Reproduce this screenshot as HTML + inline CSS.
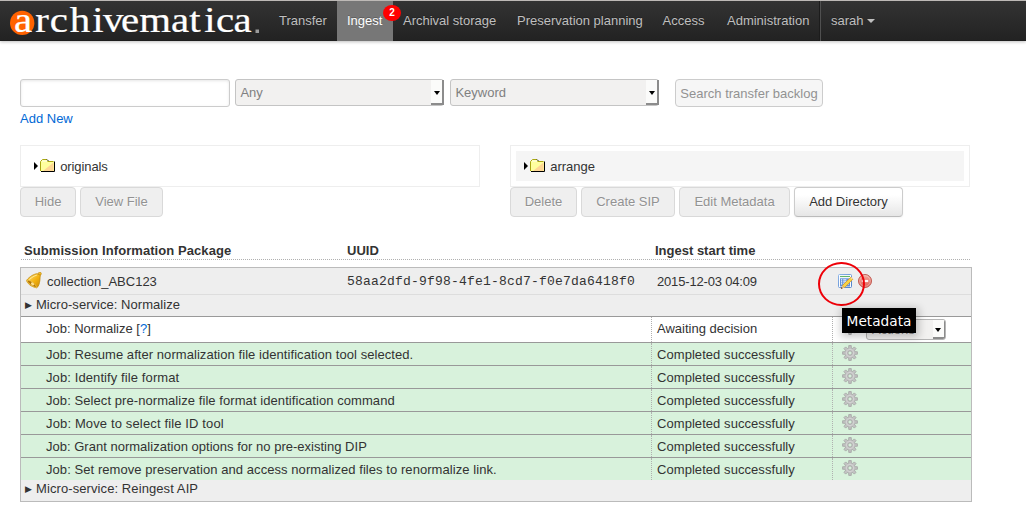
<!DOCTYPE html>
<html lang="en">
<head>
<meta charset="utf-8">
<title>Archivematica Dashboard - Ingest</title>
<style>
*{box-sizing:border-box;}
html,body{margin:0;padding:0;}
body{width:1026px;height:512px;overflow:hidden;background:#fff;position:relative;
  font-family:"Liberation Sans",Arial,sans-serif;font-size:13px;line-height:18px;color:#404040;}
a{color:#0069d6;text-decoration:none;}

/* ---------- top bar ---------- */
#topbar{position:absolute;left:0;top:0;width:1026px;height:41px;border-top:1px solid #bdb9b6;
  background:linear-gradient(#333,#222);box-shadow:0 1px 3px rgba(0,0,0,.25),inset 0 -1px 0 rgba(0,0,0,.1);}
#logo{position:absolute;left:10px;top:10px;width:24px;height:24px;border-radius:50%;background:#ff6200;}
#logo span{position:absolute;left:0;top:0;width:24px;text-align:center;color:#fff;font-size:30px;line-height:24px;}
#brand{position:absolute;left:36px;top:0;height:40px;line-height:40px;color:#fff;
  font-family:"Liberation Serif","Times New Roman",serif;font-size:36px;white-space:nowrap;}
#reg{position:absolute;left:254px;top:26px;width:5px;height:5px;background:#999;border-radius:1px;}
.nav a{position:absolute;top:0;height:40px;line-height:19px;padding:10px 10px 11px;color:#bfbfbf;
  text-shadow:0 -1px 0 rgba(0,0,0,.25);white-space:nowrap;}
.nav a.active{background:#777;color:#fff;}
#badge{position:absolute;left:383px;top:4px;width:18px;height:16px;border-radius:50%;background:#f00;
  color:#fff;font-size:10px;font-weight:bold;line-height:16px;text-align:center;}
#usersep{position:absolute;left:819px;top:0;height:40px;background:#505050;border-left:1px solid #1c1c1c;width:2px;}
.caret{display:inline-block;width:0;height:0;border-left:4px solid transparent;border-right:4px solid transparent;
  border-top:4px solid #bfbfbf;vertical-align:middle;margin-left:3px;margin-top:-1px;}

/* ---------- search row ---------- */
#q{position:absolute;left:20px;top:79px;width:210px;height:28px;border:1px solid #ccc;border-radius:3px;
  background:#fff;box-shadow:inset 0 1px 3px rgba(0,0,0,.1);}
.sel{position:absolute;top:79px;width:209px;height:27px;border:1px solid #c4c4c4;border-radius:3px;
  background:#f2f1f0;color:#808080;line-height:25px;padding-left:4.4px;font-size:13px;}
.sel i,.jsel i{position:absolute;right:-1px;top:0;bottom:0;width:13px;background:#fbfbfa;
  border-right:2px solid #8c8c8c;border-bottom:2px solid #8c8c8c;}
.sel i:after,.jsel i:after{content:"";position:absolute;left:3px;top:11px;border-left:3.5px solid transparent;
  border-right:3.5px solid transparent;border-top:4px solid #000;}
.jsel i:after{top:8px;left:1.500px;}
#sbtn{position:absolute;left:675px;top:79px;width:148px;height:28px;border:1px solid #ccc;border-radius:4px;
  background:#f6f6f6;color:#929292;line-height:28px;text-align:center;font-size:13px;}
#addnew{position:absolute;left:20px;top:110px;}

/* ---------- panes ---------- */
.pane{position:absolute;top:145px;height:42px;border:1px solid #eee;background:#fff;}
.pane .row{position:absolute;left:5px;right:5px;top:5px;height:30px;}
.pane .tri{position:absolute;left:8px;top:11px;border-top:4.5px solid transparent;border-bottom:4.5px solid transparent;border-left:4.5px solid #000;}
.pane svg{position:absolute;left:13px;top:7px;}
.pane .lbl{position:absolute;left:34.2px;top:7px;color:#333;}
.btn{position:absolute;top:187px;height:30px;border:1px solid #ccc;border-bottom-color:#bbb;border-radius:4px;
  background:linear-gradient(#fff,#fff 25%,#e6e6e6);color:#333;text-align:center;line-height:27px;
  text-shadow:0 1px 1px rgba(255,255,255,.75);box-shadow:inset 0 1px 0 rgba(255,255,255,.2),0 1px 2px rgba(0,0,0,.05);}
.btn.dis{background:#efefef;color:#929292;border-color:#d9d9d9;box-shadow:none;}

/* ---------- table ---------- */
.th{position:absolute;top:242px;font-weight:bold;color:#333;}
#thline{position:absolute;left:21px;top:259px;width:949px;border-top:1px dotted #b0b0b0;}
#sip{position:absolute;left:20px;top:267px;width:952px;height:235px;border:1px solid #bbb;background:#eee;}
#siprow{position:absolute;left:0;top:0;width:950px;height:27px;border-bottom:1px solid #ddd;background:#eee;}
.abs{position:absolute;white-space:nowrap;}
.mono{font-family:"Liberation Mono","Courier New",monospace;}
.ms{position:absolute;left:0;width:950px;height:22px;line-height:18px;color:#333;}
.job{position:absolute;left:0;width:950px;height:23px;background:#d8f2dc;border-top:1px solid #999;color:#333;}
.job .n{position:absolute;left:25px;top:3px;white-space:nowrap;}
.job .s{position:absolute;left:630px;top:0;bottom:0;width:182px;border-left:1px dotted #b0b0b0;border-right:1px dotted #b0b0b0;padding:3px 0 0 5px;white-space:nowrap;}
.job svg.gear{position:absolute;left:821px;top:2px;}
.jsel{position:absolute;left:845px;top:2px;width:80px;height:21px;border:1px solid #b5b5b5;border-radius:3px;background:#f2f1f0;color:#808080;line-height:19px;padding-left:5px;font-size:13px;overflow:hidden;}

/* ---------- annotation ---------- */
#ring{position:absolute;left:818px;top:262px;width:46.500px;height:44px;border:2px solid #ee0008;border-radius:50%;}
#tip{position:absolute;left:842px;top:308px;width:74px;height:25px;background:#000;color:#fff;
  font-family:"DejaVu Sans",sans-serif;font-size:13.700px;line-height:26.500px;text-align:center;
  box-shadow:1px 2px 8px 2px rgba(0,0,0,.22);}
</style>
</head>
<body>

<div id="topbar">
  <svg id="logosvg" width="270" height="40" viewBox="0 0 270 40" style="position:absolute;left:0;top:0">
    <circle cx="22.2" cy="21.9" r="12.2" fill="#ff6200"/>
    <text transform="scale(1.15 1)" x="12.09 30.61 43.22 60.70 80.17 89.48 105.22 121.04 148.70 164.52 177.57 187.74 202.96" y="31.2" font-family="'Liberation Serif','Times New Roman',serif" font-size="35.5" fill="#fff" stroke="#fff" stroke-width="0.25">archivematica</text>
    <rect x="255.5" y="28.5" width="3.5" height="3.5" fill="#9a9a9a"/>
  </svg>
  <div class="nav">
    <a style="left:269px">Transfer</a>
    <a class="active" style="left:337px;width:56px">Ingest</a>
    <a style="left:393px">Archival storage</a>
    <a style="left:507px">Preservation planning</a>
    <a style="left:652.5px">Access</a>
    <a style="left:717px">Administration</a>
    <a style="left:821px">sarah<span class="caret"></span></a>
  </div>
  <div id="badge">2</div>
  <div id="usersep"></div>
</div>

<div id="q"></div>
<div class="sel" style="left:235px">Any<i></i></div>
<div class="sel" style="left:450px">Keyword<i></i></div>
<div id="sbtn">Search transfer backlog</div>
<a id="addnew">Add New</a>

<div class="pane" style="left:20px;width:460px">
  <div class="row">
    <span class="tri"></span>
    <svg width="17" height="15" viewBox="0 0 17 15"><rect x="0" y="0" width="17" height="15" rx="2" fill="#fff" opacity=".0"/><path d="M2 3 L3.5 1.5 H8 L9.5 3.5 H15 V13 H2 Z" fill="#ffff9e"/><path d="M3 2.5 H8 V3.5 H3 Z" fill="#fffff0"/><path d="M4 13 L14.5 4.5 V13 Z" fill="#ffb08a" opacity=".5"/><path d="M1.5 13 V3.5 L3.5 1.5 H8" fill="none" stroke="#aaa812" stroke-width="1"/><path d="M8.5 3.5 H14.5" fill="none" stroke="#aaa812" stroke-width="1"/><path d="M8 1.5 L9.5 3" fill="none" stroke="#222" stroke-width="1"/><path d="M15.5 3.5 V13.5 H2" fill="none" stroke="#000" stroke-width="1"/></svg>
    <span class="lbl" style="letter-spacing:-.1px">originals</span>
  </div>
</div>
<div class="pane" style="left:510px;width:460px">
  <div class="row" style="background:#f5f5f5">
    <span class="tri"></span>
    <svg width="17" height="15" viewBox="0 0 17 15"><rect x="0" y="0" width="17" height="15" rx="2" fill="#fff" opacity=".0"/><path d="M2 3 L3.5 1.5 H8 L9.5 3.5 H15 V13 H2 Z" fill="#ffff9e"/><path d="M3 2.5 H8 V3.5 H3 Z" fill="#fffff0"/><path d="M4 13 L14.5 4.5 V13 Z" fill="#ffb08a" opacity=".5"/><path d="M1.5 13 V3.5 L3.5 1.5 H8" fill="none" stroke="#aaa812" stroke-width="1"/><path d="M8.5 3.5 H14.5" fill="none" stroke="#aaa812" stroke-width="1"/><path d="M8 1.5 L9.5 3" fill="none" stroke="#222" stroke-width="1"/><path d="M15.5 3.5 V13.5 H2" fill="none" stroke="#000" stroke-width="1"/></svg>
    <span class="lbl">arrange</span>
  </div>
</div>

<div class="btn dis" style="left:20px;width:56px">Hide</div>
<div class="btn dis" style="left:80px;width:83px">View File</div>
<div class="btn dis" style="left:510px;width:67px">Delete</div>
<div class="btn dis" style="left:581px;width:94px">Create SIP</div>
<div class="btn dis" style="left:679px;width:111px">Edit Metadata</div>
<div class="btn" style="left:794px;width:109px">Add Directory</div>

<div class="th" style="left:24px;letter-spacing:.07px">Submission Information Package</div>
<div class="th" style="left:347px">UUID</div>
<div class="th" style="left:655px">Ingest start time</div>
<div id="thline"></div>

<div id="sip">
  <div id="siprow">
    <svg width="17" height="17" viewBox="0 0 17 17" style="position:absolute;left:5px;top:4px"><defs><linearGradient id="bg" x1="0" y1="0" x2="1" y2="1"><stop offset="0" stop-color="#ffe27a"/><stop offset=".55" stop-color="#f3b211"/><stop offset="1" stop-color="#c98a08"/></linearGradient></defs><circle cx="13.8" cy="1.7" r="1.5" fill="#f5bd25" stroke="#c28a0c" stroke-width=".7"/><path d="M11.300 1.700C8 1.900 3.500 4.500.6 8.300.8 11 5 14.800 10.600 15.800 12.600 15 13.600 11 13.900 8 14 6 14.200 4.500 14.300 3.200Z" fill="url(#bg)" stroke="#c48a0c" stroke-width=".8"/><path d="M1 8.500C2.600 7.700 5.600 9.200 7.800 11.300 9.600 13 10.800 15 10.400 15.600 7 15.200 1.800 11.200 1 8.500Z" fill="#b27606" stroke="#f7cf55" stroke-width=".7"/><path d="M10.500 3.200C8 4 5.500 5.600 3.600 7.400" fill="none" stroke="#fff3b0" stroke-width="1" stroke-opacity=".8" stroke-linecap="round"/><ellipse cx="6.6" cy="11.900" rx="1.9" ry="1.300" transform="rotate(40 6.600 11.900)" fill="#ffe08a"/></svg>
    <span class="abs" style="left:26px;top:5px;color:#333">collection_ABC123</span>
    <span class="abs mono" style="left:326px;top:5px;color:#333;letter-spacing:.2px">58aa2dfd-9f98-4fe1-8cd7-f0e7da6418f0</span>
    <span class="abs" style="left:636px;top:5px;color:#333;letter-spacing:-.17px">2015-12-03 04:09</span>
    <svg width="17" height="17" viewBox="0 0 17 17" style="position:absolute;left:817px;top:6px"><defs><linearGradient id="mg" x1="0" y1="0" x2="1" y2="1"><stop offset="0" stop-color="#8db4e8"/><stop offset="1" stop-color="#4c7fc8"/></linearGradient></defs><rect x=".5" y=".5" width="13" height="13" rx="1" fill="#fbfcfe" stroke="url(#mg)"/><path d="M2 2.500H12" stroke="#62b36a" stroke-width="1.100"/><rect x="2" y="4.300" width="10" height="8.200" fill="#5f90d8"/><path d="M3 5.900H4.200M3 7.900H4.200M3 9.900H4.200" stroke="#fff" stroke-width="1.200"/><path d="M5.200 5.900H8.400M5.200 7.900H8.400M5.200 9.900H11" stroke="#e8f0fb" stroke-width="1.200"/><path d="M12.900 3.200L14.900 5.200 6.400 13.600 4.400 11.600Z" fill="#f6d446" stroke="#dc9a22" stroke-width=".8"/><path d="M13.300 3.600L14.500 4.800" stroke="#f3dcc0" stroke-width="1.600"/><path d="M4.400 11.600L6.400 13.600 2.900 14.900Z" fill="#e9c48a"/><path d="M3.600 13L4.700 14.200 2.800 14.900Z" fill="#5a3510"/></svg>
    <svg width="16" height="16" viewBox="0 0 16 16" style="position:absolute;left:836px;top:5px;opacity:.74"><defs><linearGradient id="rg" x1="0" y1="0" x2="0" y2="1"><stop offset="0" stop-color="#f59888"/><stop offset=".5" stop-color="#e8594a"/><stop offset="1" stop-color="#d63a2c"/></linearGradient></defs><circle cx="8" cy="8" r="6.500" fill="url(#rg)" stroke="#b0281c" stroke-width="1"/><circle cx="8" cy="8" r="5.300" fill="none" stroke="#fff" stroke-opacity=".4" stroke-width=".8"/><rect x="4.800" y="6.900" width="6.400" height="2.200" fill="#fff"/></svg>
  </div>
  <div class="ms" style="top:28px"><span class="abs" style="left:4px;top:0;font-size:9px">&#9654;</span><span class="abs" style="left:15px;top:0;letter-spacing:.04px">Micro-service: Normalize</span></div>

  <div class="job" style="top:48px;height:26px;background:#fff">
    <span class="n" style="top:3px">Job: Normalize [<a>?</a>]</span>
    <span class="s" style="padding-top:3px">Awaiting decision</span>
    <svg class="gear" width="16" height="16" viewBox="0 0 16 16"><path d="M6.74 2.85L6.73 0.61L9.27 0.61L9.26 2.85L10.75 3.47L12.33 1.88L14.12 3.67L12.53 5.25L13.15 6.74L15.39 6.73L15.39 9.27L13.15 9.26L12.53 10.75L14.12 12.33L12.33 14.12L10.75 12.53L9.26 13.15L9.27 15.39L6.73 15.39L6.74 13.15L5.25 12.53L3.67 14.12L1.88 12.33L3.47 10.75L2.85 9.26L0.61 9.27L0.61 6.73L2.85 6.74L3.47 5.25L1.88 3.67L3.67 1.88L5.25 3.47Z" fill="#c2c2c2" stroke="#a2a2a2" stroke-width=".8" stroke-linejoin="round"/><circle cx="8" cy="8" r="3.700" fill="none" stroke="#d4d4d4" stroke-width="1"/><circle cx="8" cy="8" r="2.100" fill="#fff" stroke="#a2a2a2" stroke-width=".8"/></svg>
    <div class="jsel">Actions<i></i></div>
  </div>
  <div class="job" style="top:74px"><span class="n" style="letter-spacing:0.056px">Job: Resume after normalization file identification tool selected.</span><span class="s" style="letter-spacing:.06px">Completed successfully</span><svg class="gear" width="16" height="16" viewBox="0 0 16 16"><path d="M6.74 2.85L6.73 0.61L9.27 0.61L9.26 2.85L10.75 3.47L12.33 1.88L14.12 3.67L12.53 5.25L13.15 6.74L15.39 6.73L15.39 9.27L13.15 9.26L12.53 10.75L14.12 12.33L12.33 14.12L10.75 12.53L9.26 13.15L9.27 15.39L6.73 15.39L6.74 13.15L5.25 12.53L3.67 14.12L1.88 12.33L3.47 10.75L2.85 9.26L0.61 9.27L0.61 6.73L2.85 6.74L3.47 5.25L1.88 3.67L3.67 1.88L5.25 3.47Z" fill="#c2c2c2" stroke="#a2a2a2" stroke-width=".8" stroke-linejoin="round"/><circle cx="8" cy="8" r="3.700" fill="none" stroke="#d4d4d4" stroke-width="1"/><circle cx="8" cy="8" r="2.100" fill="#d6f0da" stroke="#a2a2a2" stroke-width=".8"/></svg></div>
  <div class="job" style="top:97px"><span class="n" style="letter-spacing:0.100px">Job: Identify file format</span><span class="s" style="letter-spacing:.06px">Completed successfully</span><svg class="gear" width="16" height="16" viewBox="0 0 16 16"><path d="M6.74 2.85L6.73 0.61L9.27 0.61L9.26 2.85L10.75 3.47L12.33 1.88L14.12 3.67L12.53 5.25L13.15 6.74L15.39 6.73L15.39 9.27L13.15 9.26L12.53 10.75L14.12 12.33L12.33 14.12L10.75 12.53L9.26 13.15L9.27 15.39L6.73 15.39L6.74 13.15L5.25 12.53L3.67 14.12L1.88 12.33L3.47 10.75L2.85 9.26L0.61 9.27L0.61 6.73L2.85 6.74L3.47 5.25L1.88 3.67L3.67 1.88L5.25 3.47Z" fill="#c2c2c2" stroke="#a2a2a2" stroke-width=".8" stroke-linejoin="round"/><circle cx="8" cy="8" r="3.700" fill="none" stroke="#d4d4d4" stroke-width="1"/><circle cx="8" cy="8" r="2.100" fill="#d6f0da" stroke="#a2a2a2" stroke-width=".8"/></svg></div>
  <div class="job" style="top:120px"><span class="n" style="letter-spacing:0.068px">Job: Select pre-normalize file format identification command</span><span class="s" style="letter-spacing:.06px">Completed successfully</span><svg class="gear" width="16" height="16" viewBox="0 0 16 16"><path d="M6.74 2.85L6.73 0.61L9.27 0.61L9.26 2.85L10.75 3.47L12.33 1.88L14.12 3.67L12.53 5.25L13.15 6.74L15.39 6.73L15.39 9.27L13.15 9.26L12.53 10.75L14.12 12.33L12.33 14.12L10.75 12.53L9.26 13.15L9.27 15.39L6.73 15.39L6.74 13.15L5.25 12.53L3.67 14.12L1.88 12.33L3.47 10.75L2.85 9.26L0.61 9.27L0.61 6.73L2.85 6.74L3.47 5.25L1.88 3.67L3.67 1.88L5.25 3.47Z" fill="#c2c2c2" stroke="#a2a2a2" stroke-width=".8" stroke-linejoin="round"/><circle cx="8" cy="8" r="3.700" fill="none" stroke="#d4d4d4" stroke-width="1"/><circle cx="8" cy="8" r="2.100" fill="#d6f0da" stroke="#a2a2a2" stroke-width=".8"/></svg></div>
  <div class="job" style="top:143px"><span class="n" style="letter-spacing:0.140px">Job: Move to select file ID tool</span><span class="s" style="letter-spacing:.06px">Completed successfully</span><svg class="gear" width="16" height="16" viewBox="0 0 16 16"><path d="M6.74 2.85L6.73 0.61L9.27 0.61L9.26 2.85L10.75 3.47L12.33 1.88L14.12 3.67L12.53 5.25L13.15 6.74L15.39 6.73L15.39 9.27L13.15 9.26L12.53 10.75L14.12 12.33L12.33 14.12L10.75 12.53L9.26 13.15L9.27 15.39L6.73 15.39L6.74 13.15L5.25 12.53L3.67 14.12L1.88 12.33L3.47 10.75L2.85 9.26L0.61 9.27L0.61 6.73L2.85 6.74L3.47 5.25L1.88 3.67L3.67 1.88L5.25 3.47Z" fill="#c2c2c2" stroke="#a2a2a2" stroke-width=".8" stroke-linejoin="round"/><circle cx="8" cy="8" r="3.700" fill="none" stroke="#d4d4d4" stroke-width="1"/><circle cx="8" cy="8" r="2.100" fill="#d6f0da" stroke="#a2a2a2" stroke-width=".8"/></svg></div>
  <div class="job" style="top:166px"><span class="n" style="letter-spacing:0.013px">Job: Grant normalization options for no pre-existing DIP</span><span class="s" style="letter-spacing:.06px">Completed successfully</span><svg class="gear" width="16" height="16" viewBox="0 0 16 16"><path d="M6.74 2.85L6.73 0.61L9.27 0.61L9.26 2.85L10.75 3.47L12.33 1.88L14.12 3.67L12.53 5.25L13.15 6.74L15.39 6.73L15.39 9.27L13.15 9.26L12.53 10.75L14.12 12.33L12.33 14.12L10.75 12.53L9.26 13.15L9.27 15.39L6.73 15.39L6.74 13.15L5.25 12.53L3.67 14.12L1.88 12.33L3.47 10.75L2.85 9.26L0.61 9.27L0.61 6.73L2.85 6.74L3.47 5.25L1.88 3.67L3.67 1.88L5.25 3.47Z" fill="#c2c2c2" stroke="#a2a2a2" stroke-width=".8" stroke-linejoin="round"/><circle cx="8" cy="8" r="3.700" fill="none" stroke="#d4d4d4" stroke-width="1"/><circle cx="8" cy="8" r="2.100" fill="#d6f0da" stroke="#a2a2a2" stroke-width=".8"/></svg></div>
  <div class="job" style="top:189px"><span class="n" style="letter-spacing:0.063px">Job: Set remove preservation and access normalized files to renormalize link.</span><span class="s" style="letter-spacing:.06px">Completed successfully</span><svg class="gear" width="16" height="16" viewBox="0 0 16 16"><path d="M6.74 2.85L6.73 0.61L9.27 0.61L9.26 2.85L10.75 3.47L12.33 1.88L14.12 3.67L12.53 5.25L13.15 6.74L15.39 6.73L15.39 9.27L13.15 9.26L12.53 10.75L14.12 12.33L12.33 14.12L10.75 12.53L9.26 13.15L9.27 15.39L6.73 15.39L6.74 13.15L5.25 12.53L3.67 14.12L1.88 12.33L3.47 10.75L2.85 9.26L0.61 9.27L0.61 6.73L2.85 6.74L3.47 5.25L1.88 3.67L3.67 1.88L5.25 3.47Z" fill="#c2c2c2" stroke="#a2a2a2" stroke-width=".8" stroke-linejoin="round"/><circle cx="8" cy="8" r="3.700" fill="none" stroke="#d4d4d4" stroke-width="1"/><circle cx="8" cy="8" r="2.100" fill="#d6f0da" stroke="#a2a2a2" stroke-width=".8"/></svg></div>

  <div class="ms" style="top:212px"><span class="abs" style="left:4px;top:0;font-size:9px">&#9654;</span><span class="abs" style="left:15px;top:0;letter-spacing:.09px">Micro-service: Reingest AIP</span></div>
</div>

<div id="ring"></div>
<div id="tip">Metadata</div>

</body>
</html>
